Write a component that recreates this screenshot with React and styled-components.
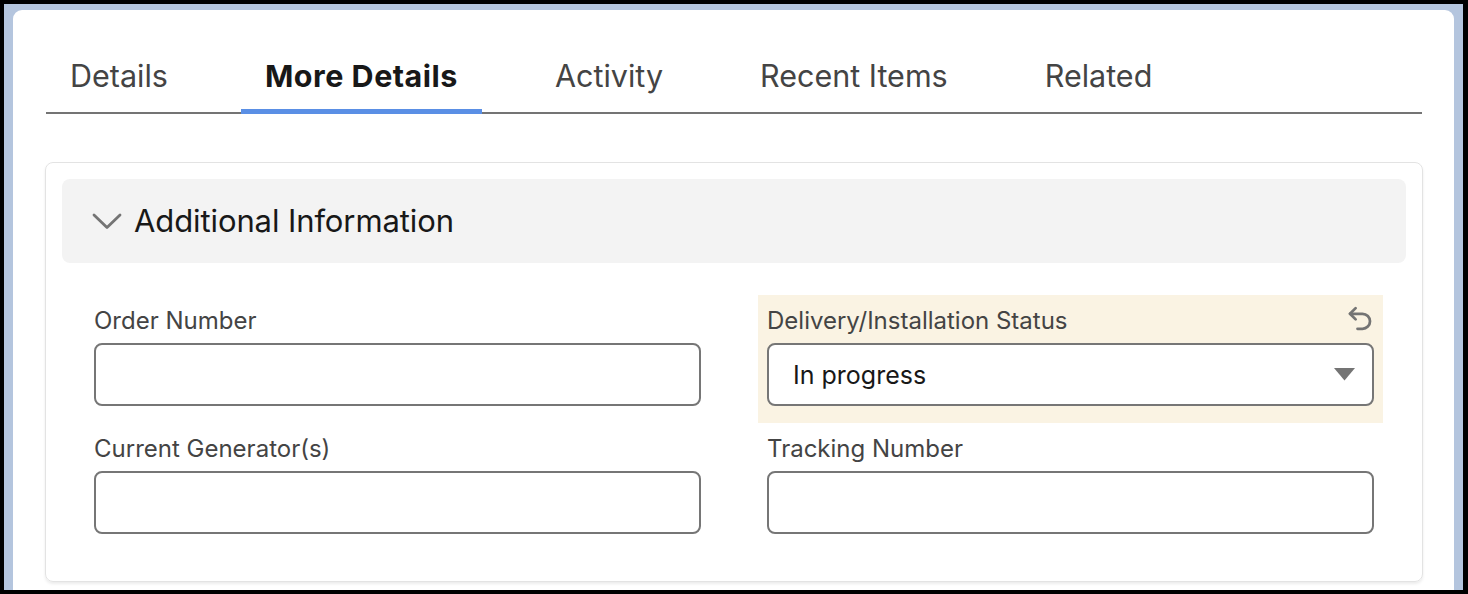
import React from "react";
import styled, { createGlobalStyle } from "styled-components";

const Global = createGlobalStyle`
  html, body { margin: 0; padding: 0; background: #000; }
  * { box-sizing: border-box; }
  body { font-family: Inter, "Noto Sans", sans-serif; }
`;

const Frame = styled.div`
  width: 1468px;
  height: 594px;
  border-style: solid;
  border-color: #000;
  border-width: 4px 5px 4px 4px;
  background: #b4c5de;
  padding: 6px 9px 0 9px;
  display: flex;
`;

const Panel = styled.div`
  flex: 1;
  background: #fff;
  border-radius: 9px 9px 0 0;
  overflow: hidden;
  padding: 24px 31px 0 32px;
`;

const TabBar = styled.div`
  display: flex;
  gap: 49px;
  margin: 0 1px;
  border-bottom: 2px solid #747474;
`;

const Tab = styled.div`
  padding: 24px 24px 15px;
  margin-bottom: -2px;
  font-size: 30.5px;
  line-height: 36px;
  letter-spacing: ${(p) => (p.$active ? "0.5px" : "0")};
  color: ${(p) => (p.$active ? "#181818" : "#444444")};
  font-weight: ${(p) => (p.$active ? 700 : 400)};
  border-bottom: 5px solid ${(p) => (p.$active ? "#5a8fe5" : "transparent")};
`;

const Card = styled.div`
  margin-top: 48px;
  border: 1px solid #e3e3e3;
  border-radius: 8px;
  box-shadow: 0 2px 3px rgba(0, 0, 0, 0.08);
  padding: 16px 16px 30px;
`;

const SectionHeader = styled.div`
  height: 84px;
  background: #f3f3f3;
  border-radius: 8px;
  display: flex;
  align-items: center;
  gap: 12px;
  padding-left: 30px;
`;

const SectionTitle = styled.div`
  font-size: 31px;
  line-height: 36px;
  color: #181818;
  letter-spacing: -0.1px;
`;

const FieldGrid = styled.div`
  display: grid;
  grid-template-columns: 1fr 1fr;
  column-gap: 48px;
  margin-top: 32px;
  padding: 0 23px 0 23px;
`;

const Field = styled.div`
  padding: 11px 9px 17px;
  background: ${(p) => (p.$changed ? "#faf3e3" : "transparent")};
`;

const LabelRow = styled.div`
  display: flex;
  align-items: center;
  justify-content: space-between;
  height: 30px;
  margin-bottom: 7px;
`;

const Label = styled.div`
  font-size: 24px;
  line-height: 30px;
  color: #444444;
`;

const InputBox = styled.div`
  height: 63px;
  border: 2px solid #767676;
  border-radius: 8px;
  background: #fff;
  display: flex;
  align-items: center;
  justify-content: space-between;
  padding: 0 17px 0 24px;
`;

const Value = styled.span`
  font-size: 25px;
  color: #181818;
`;

const Chevron = () => (
  <svg width="30" height="17" viewBox="0 0 30 17" fill="none">
    <path d="M2 2 L15 14.5 L28 2" stroke="#747474" strokeWidth="2.8" strokeLinecap="round" strokeLinejoin="round" />
  </svg>
);

const UndoIcon = () => (
  <svg width="30" height="30" viewBox="0 0 24 24" fill="none" stroke="#747474" strokeWidth="2.2" strokeLinecap="round" strokeLinejoin="round" style={{ marginRight: -1, marginTop: -3 }}>
    <path d="M8.5 2.5 4 7l4.5 4.5" />
    <path d="M4 7h10a6 6 0 0 1 0 12H10" />
  </svg>
);

const Caret = () => (
  <svg width="21" height="13" viewBox="0 0 21 13">
    <path d="M0 0 H21 L10.5 12.5 Z" fill="#747474" />
  </svg>
);

const tabs = ["Details", "More Details", "Activity", "Recent Items", "Related"];

export default function App() {
  return (
    <>
      <Global />
      <Frame>
        <Panel>
          <TabBar>
            {tabs.map((t) => (
              <Tab key={t} $active={t === "More Details"}>
                {t}
              </Tab>
            ))}
          </TabBar>
          <Card>
            <SectionHeader>
              <Chevron />
              <SectionTitle>Additional Information</SectionTitle>
            </SectionHeader>
            <FieldGrid>
              <Field>
                <LabelRow>
                  <Label>Order Number</Label>
                </LabelRow>
                <InputBox />
              </Field>
              <Field $changed>
                <LabelRow>
                  <Label>Delivery/Installation Status</Label>
                  <UndoIcon />
                </LabelRow>
                <InputBox>
                  <Value>In progress</Value>
                  <Caret />
                </InputBox>
              </Field>
              <Field>
                <LabelRow>
                  <Label>Current Generator(s)</Label>
                </LabelRow>
                <InputBox />
              </Field>
              <Field>
                <LabelRow>
                  <Label>Tracking Number</Label>
                </LabelRow>
                <InputBox />
              </Field>
            </FieldGrid>
          </Card>
        </Panel>
      </Frame>
    </>
  );
}
